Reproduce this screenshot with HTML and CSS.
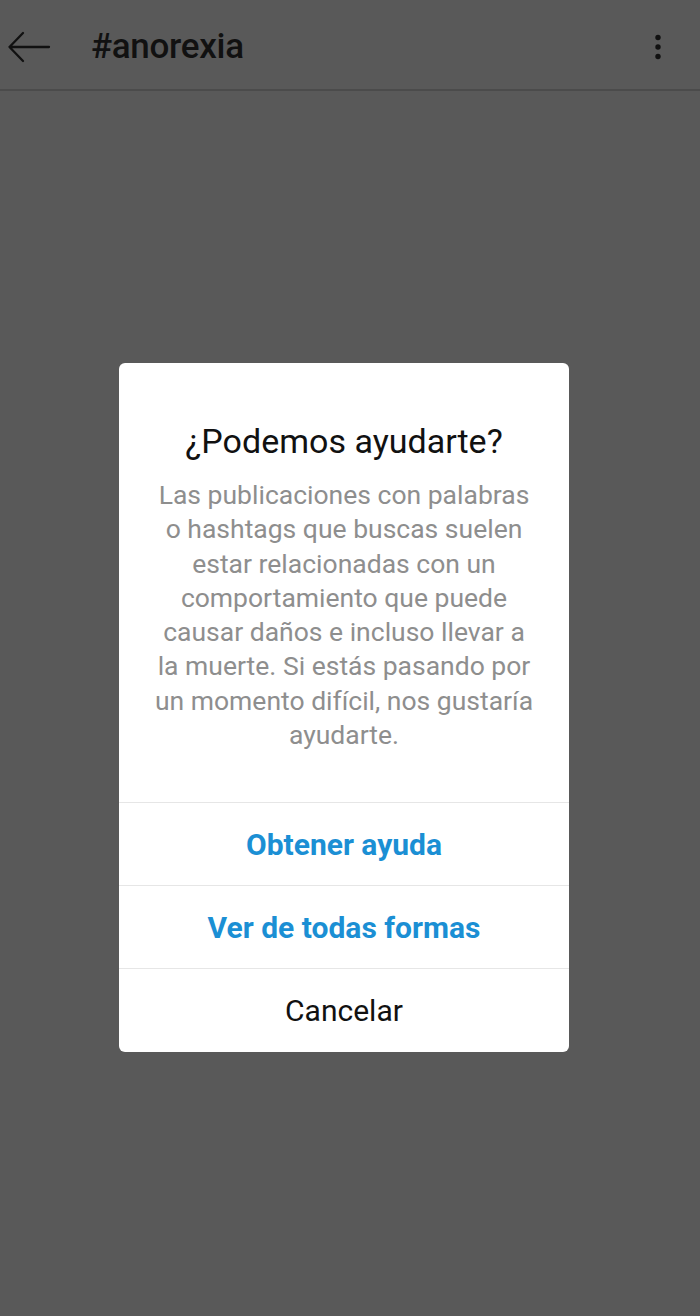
FILE: index.html
```html
<!DOCTYPE html>
<html lang="es">
<head>
<meta charset="utf-8">
<title>#anorexia</title>
<link rel="stylesheet" href="styles.css">
</head>
<body>
<header class="topbar">
  <svg class="back" width="44" height="32" viewBox="0 0 44 32" aria-hidden="true">
    <path d="M42 16H2.5M16 2L2.5 16 16 30" fill="none" stroke="#111" stroke-width="2.3" stroke-linecap="round" stroke-linejoin="round"/>
  </svg>
  <h1 class="tag">#anorexia</h1>
  <svg class="more" width="8" height="26" viewBox="0 0 8 26" aria-hidden="true">
    <circle cx="4" cy="3.5" r="2.7" fill="#111"/>
    <circle cx="4" cy="13" r="2.7" fill="#111"/>
    <circle cx="4" cy="22.5" r="2.7" fill="#111"/>
  </svg>
</header>
<main class="stage">
  <div class="dialog">
    <div class="dialog-body">
      <h2 class="title">¿Podemos ayudarte?</h2>
      <p class="text">Las publicaciones con palabras<br>o hashtags que buscas suelen<br>estar relacionadas con un<br>comportamiento que puede<br>causar daños e incluso llevar a<br>la muerte. Si estás pasando por<br>un momento difícil, nos gustaría<br>ayudarte.</p>
    </div>
    <div class="action primary">Obtener ayuda</div>
    <div class="action primary">Ver de todas formas</div>
    <div class="action last">Cancelar</div>
  </div>
</main>
</body>
</html>
```
FILE: styles.css
```css
html, body {
  margin: 0;
  padding: 0;
}
body {
  background: #595959;
  font-family: Roboto, "Noto Sans", "Liberation Sans", sans-serif;
  height: 1316px;
  overflow: hidden;
}
.topbar {
  height: 85px;
  padding: 4px 0 0 7px;
  border-bottom: 2px solid #4b4b4b;
  display: flex;
  align-items: center;
  box-sizing: content-box;
}
.back {
  display: block;
}
.tag {
  margin: 0 0 0 40px;
  font-size: 35px;
  font-weight: 500;
  color: #111;
  flex: 1;
  line-height: 40px;
  letter-spacing: -0.3px;
}
.more {
  display: block;
  margin-right: 38px;
}
.stage {
  padding-top: 272px;
  padding-right: 12px;
  display: flex;
  justify-content: center;
}
.dialog {
  width: 450px;
  background: #fff;
  border-radius: 6px;
  overflow: hidden;
}
.dialog-body {
  padding: 58px 10px 50px;
  text-align: center;
}
.title {
  margin: 0;
  font-size: 34px;
  font-weight: 400;
  line-height: 40px;
  color: #111;
}
.text {
  margin: 17px 0 0;
  font-size: 26.5px;
  line-height: 34.3px;
  color: #8e8e8e;
}
.action {
  height: 82px;
  border-top: 1px solid #e6e6e6;
  display: flex;
  align-items: center;
  justify-content: center;
  font-size: 30px;
  color: #111;
}
.action.last {
  height: 83px;
}
.action.primary {
  color: #1b8fd4;
  font-weight: 700;
}
```
